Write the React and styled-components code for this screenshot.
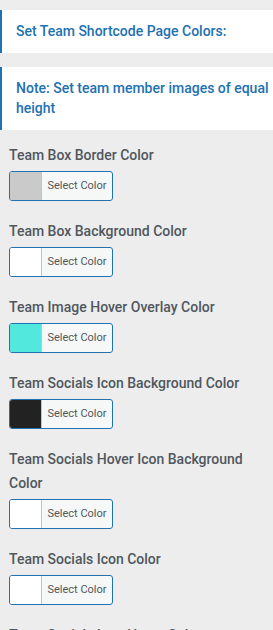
import styled, { createGlobalStyle } from 'styled-components'

const GlobalStyle = createGlobalStyle`
    html, body {
        margin: 0;
        padding: 0;
        background: #ededed;
    }
    body {
        font-family: Roboto, "Liberation Sans", sans-serif;
        overflow: hidden;
    }
`

const Page = styled.div`
    padding: 10px 0 0 0;
    width: 273px;
`

const Notice = styled.div`
    background: #fff;
    border-left: 2px solid #2271b1;
    padding: 11px 0 11px 14px;
    margin-bottom: 14px;
    color: #2271b1;
    font-size: 14px;
    font-weight: 500;
    line-height: 20.5px;
`

const Fields = styled.div`
    padding: 0 9px;
    margin-top: -1px;
`

const Field = styled.div`
    display: flex;
    flex-direction: column;
    align-items: flex-start;
    margin-bottom: 18px;
`

const Label = styled.div`
    color: #50575e;
    font-size: 14px;
    font-weight: 500;
    line-height: 24px;
    margin-bottom: 4px;
`

const ColorButton = styled.button`
    display: flex;
    align-items: stretch;
    width: 104px;
    height: 30px;
    padding: 0;
    border: 1px solid #2271b1;
    border-radius: 3px;
    background: #f6f7f7;
    overflow: hidden;
    cursor: pointer;
`

const Swatch = styled.span`
    width: 31px;
    background: ${props => props.color};
    border-right: 1px solid #c3c4c7;
`

const ButtonText = styled.span`
    flex: 1;
    display: flex;
    align-items: center;
    justify-content: center;
    color: #50575e;
    font-family: Roboto, "Liberation Sans", sans-serif;
    font-size: 11px;
`

const fields = [
    { label: 'Team Box Border Color', color: '#cacaca' },
    { label: 'Team Box Background Color', color: '#ffffff' },
    { label: 'Team Image Hover Overlay Color', color: '#52e8de' },
    { label: 'Team Socials Icon Background Color', color: '#222222' },
    { label: 'Team Socials Hover Icon Background Color', color: '#ffffff' },
    { label: 'Team Socials Icon Color', color: '#ffffff' },
    { label: 'Team Socials Icon Hover Color', color: '#ffffff' },
]

const App = () => {
    return (
        <Page>
            <GlobalStyle />
            <Notice>Set Team Shortcode Page Colors:</Notice>
            <Notice>Note: Set team member images of equal height</Notice>
            <Fields>
                {fields.map(f => (
                    <Field key={f.label}>
                        <Label>{f.label}</Label>
                        <ColorButton type="button">
                            <Swatch color={f.color} />
                            <ButtonText>Select Color</ButtonText>
                        </ColorButton>
                    </Field>
                ))}
            </Fields>
        </Page>
    )
}

export default App
